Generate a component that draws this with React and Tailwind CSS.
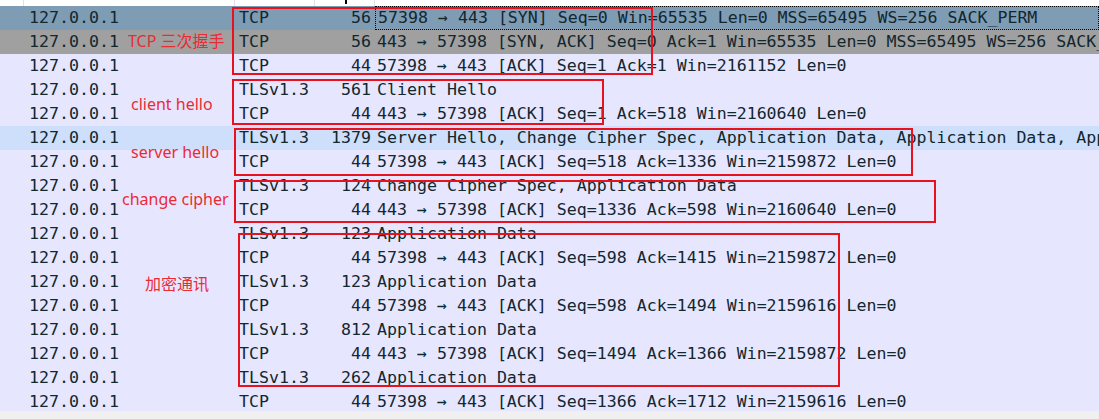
const rows = [
  { proto: "TCP", len: "56", info: "57398 → 443 [SYN] Seq=0 Win=65535 Len=0 MSS=65495 WS=256 SACK_PERM", bg: "bg-[#7f9cb5]", focus: true },
  { proto: "TCP", len: "56", info: "443 → 57398 [SYN, ACK] Seq=0 Ack=1 Win=65535 Len=0 MSS=65495 WS=256 SACK_PERM", bg: "bg-[#a0a0a0]" },
  { proto: "TCP", len: "44", info: "57398 → 443 [ACK] Seq=1 Ack=1 Win=2161152 Len=0" },
  { proto: "TLSv1.3", len: "561", info: "Client Hello" },
  { proto: "TCP", len: "44", info: "443 → 57398 [ACK] Seq=1 Ack=518 Win=2160640 Len=0" },
  { proto: "TLSv1.3", len: "1379", info: "Server Hello, Change Cipher Spec, Application Data, Application Data, Application Data", bg: "bg-[#cddffa]" },
  { proto: "TCP", len: "44", info: "57398 → 443 [ACK] Seq=518 Ack=1336 Win=2159872 Len=0" },
  { proto: "TLSv1.3", len: "124", info: "Change Cipher Spec, Application Data" },
  { proto: "TCP", len: "44", info: "443 → 57398 [ACK] Seq=1336 Ack=598 Win=2160640 Len=0" },
  { proto: "TLSv1.3", len: "123", info: "Application Data" },
  { proto: "TCP", len: "44", info: "57398 → 443 [ACK] Seq=598 Ack=1415 Win=2159872 Len=0" },
  { proto: "TLSv1.3", len: "123", info: "Application Data" },
  { proto: "TCP", len: "44", info: "57398 → 443 [ACK] Seq=598 Ack=1494 Win=2159616 Len=0" },
  { proto: "TLSv1.3", len: "812", info: "Application Data" },
  { proto: "TCP", len: "44", info: "443 → 57398 [ACK] Seq=1494 Ack=1366 Win=2159872 Len=0" },
  { proto: "TLSv1.3", len: "262", info: "Application Data" },
  { proto: "TCP", len: "44", info: "57398 → 443 [ACK] Seq=1366 Ack=1712 Win=2159616 Len=0" },
];

// red hand-drawn notes laid over the capture
const labels = [
  { text: "TCP 三次握手", cls: "left-[128px] top-[30px]" },
  { text: "client hello", cls: "left-[131px] top-[93px]" },
  { text: "server hello", cls: "left-[131px] top-[141px]" },
  { text: "change cipher", cls: "left-[122px] top-[188px]" },
  { text: "加密通讯", cls: "left-[145px] top-[273px]" },
];

const boxes = [
  "left-[232px] top-[7px] w-[421px] h-[68px]",
  "left-[232px] top-[79px] w-[372px] h-[46px]",
  "left-[234px] top-[128px] w-[679px] h-[48px]",
  "left-[234px] top-[180px] w-[702px] h-[43px]",
  "left-[238px] top-[233px] w-[602px] h-[154px]",
];

function PacketRow({ row }) {
  return (
    <div className={`flex h-[24px] items-center ${row.bg || "bg-[#e7e6ff]"}`}>
      <div className="w-[24px] shrink-0" />
      <div className="w-[211px] shrink-0 pl-[5px]">127.0.0.1</div>
      <div className="w-[80px] shrink-0 pl-[4px]">{row.proto}</div>
      <div className="w-[60px] shrink-0 pr-[4px] text-right">{row.len}</div>
      <div
        className={`flex-1 h-full flex items-center pl-[2px] whitespace-nowrap overflow-hidden ${
          row.focus ? "border border-dotted border-black" : ""
        }`}
      >
        {row.info}
      </div>
    </div>
  );
}

export default function App() {
  return (
    <div className="relative w-[1099px] h-[419px] overflow-hidden bg-[#f0f0f0] text-[#12272e] font-['DejaVu_Sans_Mono',monospace] text-[16.6px]">
      <div className="flex h-[6px] bg-white">
        <div className="w-[24px] border-r border-[#e0e0e0]" />
        <div className="w-[211px] border-r border-[#e0e0e0]" />
        <div className="w-[80px] border-r border-[#e0e0e0]" />
        <div className="flex w-[60px] justify-end pr-[27px] border-r border-[#e0e0e0]">
          <div className="h-[4px] w-[2px] bg-black" />
        </div>
      </div>

      <div className="h-[405px] overflow-hidden">
        {rows.map((row, i) => (
          <PacketRow key={i} row={row} />
        ))}
      </div>

      {labels.map((l) => (
        <div
          key={l.text}
          className={`absolute ${l.cls} leading-[22px] text-[16px] text-[#ea2b36] font-['Noto_Sans','Noto_Sans_CJK_SC',sans-serif] whitespace-nowrap`}
        >
          {l.text}
        </div>
      ))}

      {boxes.map((b, i) => (
        <div key={i} className={`absolute ${b} border-2 border-[#e8121f]`} />
      ))}
    </div>
  );
}
